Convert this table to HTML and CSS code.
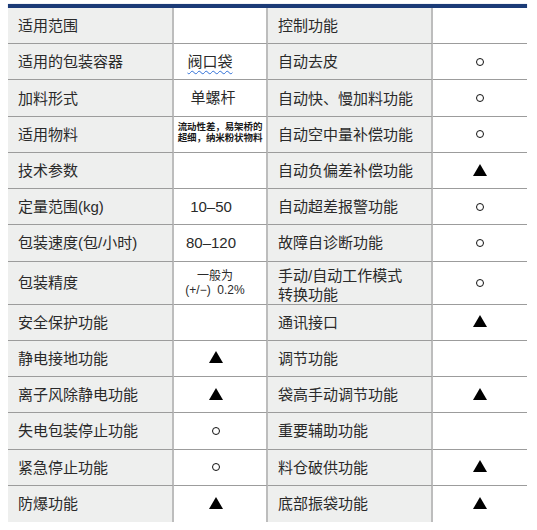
FILE: index.html
```html
<!DOCTYPE html>
<html lang="zh-CN">
<head>
<meta charset="utf-8">
<title>参数表</title>
<link rel="stylesheet" href="styles.css">
</head>
<body>
<div class="sheet">
  <div class="topbar"></div>
  <div class="grid">
    <div class="cell label">适用范围</div>
    <div class="cell val"></div>
    <div class="cell label">控制功能</div>
    <div class="cell val2"></div>

    <div class="cell label">适用的包装容器</div>
    <div class="cell val"><span class="spell">阀口袋</span></div>
    <div class="cell label">自动去皮</div>
    <div class="cell val2"><span class="circ"></span></div>

    <div class="cell label">加料形式</div>
    <div class="cell val">单螺杆</div>
    <div class="cell label">自动快、慢加料功能</div>
    <div class="cell val2"><span class="circ"></span></div>

    <div class="cell label">适用物料</div>
    <div class="cell val tiny"><span>流动性差，易架桥的<br>超细，纳米粉状物料</span></div>
    <div class="cell label">自动空中量补偿功能</div>
    <div class="cell val2"><span class="circ"></span></div>

    <div class="cell label">技术参数</div>
    <div class="cell val"></div>
    <div class="cell label">自动负偏差补偿功能</div>
    <div class="cell val2"><span class="tri"></span></div>

    <div class="cell label">定量范围(kg)</div>
    <div class="cell val num">10–50</div>
    <div class="cell label">自动超差报警功能</div>
    <div class="cell val2"><span class="circ"></span></div>

    <div class="cell label">包装速度(包/小时)</div>
    <div class="cell val num">80–120</div>
    <div class="cell label">故障自诊断功能</div>
    <div class="cell val2"><span class="circ"></span></div>

    <div class="cell label">包装精度</div>
    <div class="cell val small"><span>一般为<br>(+/−)&nbsp; 0.2%</span></div>
    <div class="cell label two"><span>手动/自动工作模式<br>转换功能</span></div>
    <div class="cell val2"><span class="circ"></span></div>

    <div class="cell label">安全保护功能</div>
    <div class="cell val"></div>
    <div class="cell label">通讯接口</div>
    <div class="cell val2"><span class="tri"></span></div>

    <div class="cell label">静电接地功能</div>
    <div class="cell val"><span class="tri"></span></div>
    <div class="cell label">调节功能</div>
    <div class="cell val2"></div>

    <div class="cell label">离子风除静电功能</div>
    <div class="cell val"><span class="tri"></span></div>
    <div class="cell label">袋高手动调节功能</div>
    <div class="cell val2"><span class="tri"></span></div>

    <div class="cell label">失电包装停止功能</div>
    <div class="cell val"><span class="circ"></span></div>
    <div class="cell label">重要辅助功能</div>
    <div class="cell val2"></div>

    <div class="cell label">紧急停止功能</div>
    <div class="cell val"><span class="circ"></span></div>
    <div class="cell label">料仓破供功能</div>
    <div class="cell val2"><span class="tri"></span></div>

    <div class="cell label last">防爆功能</div>
    <div class="cell val last"><span class="tri"></span></div>
    <div class="cell label last">底部振袋功能</div>
    <div class="cell val2 last"><span class="tri"></span></div>
  </div>
</div>
</body>
</html>
```
FILE: styles.css
```css
html, body {
  margin: 0;
  padding: 0;
  background: #ffffff;
}
body {
  font-family: "Liberation Sans", "Noto Sans CJK SC", sans-serif;
  color: #2a2a2a;
}
.sheet {
  margin: 4px 0 0 8px;
  width: 519px;
}
.topbar {
  height: 4px;
  background: #1b3b77;
  box-shadow: 0 0 1px #6f86b0;
}
.grid {
  display: grid;
  grid-template-columns: 166px 94px 165px 94px;
  grid-template-rows: repeat(14, 1fr);
  height: 514px;
}
.cell {
  box-sizing: border-box;
  display: flex;
  align-items: center;
  border-bottom: 1px solid #9c9c9c;
  font-size: 15px;
  line-height: 18px;
}
.cell.last {
  border-bottom: none;
}
.label {
  background: #eeefee;
  padding-left: 10px;
  padding-top: 1px;
  border-right: 2px solid #bdbdbd;
}
.label.two {
  line-height: 19px;
  padding-top: 4px;
}
.val {
  background: #ffffff;
  justify-content: center;
  padding-right: 14px;
  border-right: 2px solid #bdbdbd;
  text-align: center;
}
.val2 {
  background: #ffffff;
  justify-content: center;
}
.num {
  padding-right: 18px;
  font-size: 15px;
}
.small {
  font-size: 12px;
  line-height: 14px;
  padding-right: 10px;
}
.tiny {
  font-size: 9.5px;
  line-height: 11px;
  font-weight: 700;
  padding-right: 0;
  letter-spacing: -0.1px;
  color: #1a1a1a;
  padding-bottom: 4px;
}
.spell {
  text-decoration: underline wavy #2f6fd6;
  text-decoration-thickness: 1px;
  text-underline-offset: 3px;
  padding-right: 6px;
}
.circ {
  display: inline-block;
  width: 6px;
  height: 6px;
  border: 1.5px solid #111;
  border-radius: 50%;
}
.val .circ, .val .tri {
  margin-right: -6px;
}
.tri {
  display: inline-block;
  width: 0;
  height: 0;
  border-left: 7px solid transparent;
  border-right: 7px solid transparent;
  border-bottom: 12px solid #000;
  margin-bottom: 2px;
}
```
